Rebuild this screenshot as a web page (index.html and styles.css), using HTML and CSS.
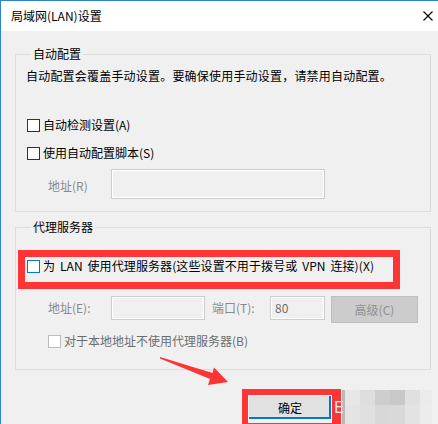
FILE: index.html
```html
<!DOCTYPE html>
<html lang="zh-CN">
<head>
<meta charset="utf-8">
<title>局域网(LAN)设置</title>
<link rel="stylesheet" href="styles.css">
</head>
<body>
<div class="window">
  <div class="titlebar">
    <span class="title">局域网(LAN)设置</span>
    <svg class="close" width="10" height="10" viewBox="0 0 10 10"><path d="M0.5 0.5L9.5 9.5M9.5 0.5L0.5 9.5" stroke="#000" stroke-width="1.1" fill="none"/></svg>
  </div>
  <div class="body">
    <fieldset class="group g1">
      <legend>自动配置</legend>
      <p class="desc">自动配置会覆盖手动设置。要确保使用手动设置，请禁用自动配置。</p>
      <label class="check c1"><span class="box"></span>自动检测设置(A)</label>
      <label class="check c2"><span class="box"></span>使用自动配置脚本(S)</label>
      <div class="addr-row">
        <span class="lbl">地址(R)</span>
        <span class="input input-script"></span>
      </div>
    </fieldset>
    <fieldset class="group g2">
      <legend>代理服务器</legend>
      <div class="redbox">
        <label class="check wide"><span class="box focus"></span>为 LAN 使用代理服务器(这些设置不用于拨号或 VPN 连接)(X)</label>
      </div>
      <div class="proxy-row">
        <span class="lbl lbl-addr">地址(E):</span>
        <span class="input input-addr"></span>
        <span class="lbl lbl-port">端口(T):</span>
        <span class="input input-port">80</span>
        <span class="btn-adv">高级(C)</span>
      </div>
      <label class="check disabled"><span class="box"></span>对于本地地址不使用代理服务器(B)</label>
    </fieldset>
    <div class="footer">
      <div class="okframe"><div class="ok">确定</div></div>
      <div class="mosaic">
        <span class="m m-edge"></span><span class="m m1"></span><span class="m m2"></span><span class="m m3"></span><span class="m m4"></span><span class="m m5"></span><span class="m m6"></span>
        <span class="m m-edge"></span><span class="m m7"></span><span class="m m8"></span><span class="m m9"></span><span class="m m10"></span><span class="m m11"></span><span class="m m12"></span>
      </div>
    </div>
    <span class="wm">E</span>
    <svg class="arrow" width="438" height="424" viewBox="0 0 438 424"><polygon points="160,357 212.5,373 214,367.5 228,382 208,385 210,379 160,358.5" fill="#fb3434"/></svg>
  </div>
</div>
</body>
</html>
```

FILE: styles.css
```css
* { box-sizing: border-box; }
html, body { margin: 0; padding: 0; background: #f0f0f0; }
body {
  font-family: "Noto Sans CJK SC", "Noto Sans", sans-serif;
  font-size: 12px;
  line-height: 16px;
  color: #000;
}
.window {
  position: relative;
  width: 438px;
  height: 424px;
  overflow: hidden;
  border-top: 1px solid #2b83d6;
  border-left: 1px solid #2b83d6;
  background: #f0f0f0;
}
.titlebar {
  height: 30px;
  background: #fff;
  display: flex;
  align-items: center;
  justify-content: space-between;
  padding: 0 5px 1px 10px;
}
.title { font-size: 12px; line-height: 16px; }
.close { display: block; }
.body { padding-top: 15px; }
.group {
  margin: 0 0 0 14px;
  width: 416px;
  padding: 0 0 0 10px;
  border: 1px solid #dcdcdc;
  min-inline-size: 0;
}
.group legend {
  margin-left: 5px;
  padding: 0 2px;
  line-height: 16px;
  font-size: 12px;
}
.g1 { padding-bottom: 12px; }
.g2 { margin-top: 7px; padding-bottom: 20px; }
.desc { margin: 6px 0 0; white-space: nowrap; letter-spacing: 0.2px; }
.check {
  display: flex;
  align-items: center;
  height: 16px;
  white-space: nowrap;
}
.check.wide { word-spacing: 2px; letter-spacing: 0.1px; }
.c1 { margin-top: 33px; }
.c2 { margin-top: 12px; }
.box {
  width: 13px;
  height: 13px;
  margin: 0 3px 0 1px;
  border: 1px solid #333;
  background: #fff;
  flex: none;
}
.box.focus { border-color: #0078d7; }
.check.disabled { margin: 10px 0 0 21px; color: #6d6d6d; }
.check.disabled .box { border-color: #bcbcbc; }
.addr-row {
  display: flex;
  align-items: center;
  margin: 8px 0 0 22px;
  height: 30px;
}
.lbl { color: #8a8a8a; flex: none; }
.addr-row .lbl { width: 63px; padding-top: 3px; }
.input {
  display: block;
  flex: none;
  border: 1px solid #cccccc;
  box-shadow: inset 0 0 0 1px #fff;
  background: #f0f0f0;
}
.input-script { width: 214px; height: 30px; }
.redbox {
  margin: 15px 0 0 -8px;
  width: 382px;
  height: 39px;
  border: 7px solid #fd3535;
  padding: 1px 0 0 1px;
}
.proxy-row {
  display: flex;
  align-items: flex-start;
  margin: 7px 0 0 22px;
}
.proxy-row .lbl { line-height: 24px; }
.lbl-addr { width: 63px; }
.input-addr { width: 94px; height: 24px; }
.lbl-port { width: 58px; margin-left: 7px; }
.input-port {
  width: 55px;
  height: 24px;
  line-height: 22px;
  padding-left: 4px;
  color: #6d6d6d;
}
.btn-adv {
  margin-left: 6px;
  width: 87px;
  height: 27px;
  line-height: 25px;
  text-align: center;
  background: #cccccc;
  border: 1px solid #bfbfbf;
  color: #8f8f8f;
}
.footer {
  display: flex;
  align-items: flex-start;
  margin-top: 19px;
  padding-left: 241px;
}
.okframe {
  width: 99px;
  height: 40px;
  border-style: solid;
  border-color: #fd3535;
  border-width: 6px 9px 6px 6px;
  flex: none;
}
.ok {
  height: 25px;
  line-height: 25px;
  text-align: center;
  background: #e1e1e1;
  box-shadow: inset 1px 1px 0 #f6f6f6, inset -1px -1px 0 #f4f4f4, inset -3px -3px 0 #0078d7;
  color: #000;
}
.mosaic {
  margin: 1px 0 0 1px;
  display: grid;
  grid-template-columns: 3px 15px 15px 15px 15px 15px 12px;
  grid-template-rows: 15px 20px;
}
.m { display: block; }
.m-edge { background: #b9b9b9; }
.m1 { background: #e7e7e7; }
.m2 { background: #dedede; }
.m3 { background: #cdcdcd; }
.m4 { background: #c8c8c8; }
.m5 { background: #e0e0e0; }
.m6 { background: #ebebeb; }
.m7 { background: #e4e4e4; }
.m8 { background: #e0e0e0; }
.m9 { background: #d8d8d8; }
.m10 { background: #d9d9d9; }
.m11 { background: #e3e3e3; }
.m12 { background: #ececec; }
.wm {
  position: absolute;
  left: 333px;
  top: 398px;
  font-size: 15px;
  line-height: 18px;
  color: #fae6e6;
  font-family: "DejaVu Sans", sans-serif;
}
.arrow {
  position: absolute;
  left: -1px;
  top: -1px;
  pointer-events: none;
}
```
